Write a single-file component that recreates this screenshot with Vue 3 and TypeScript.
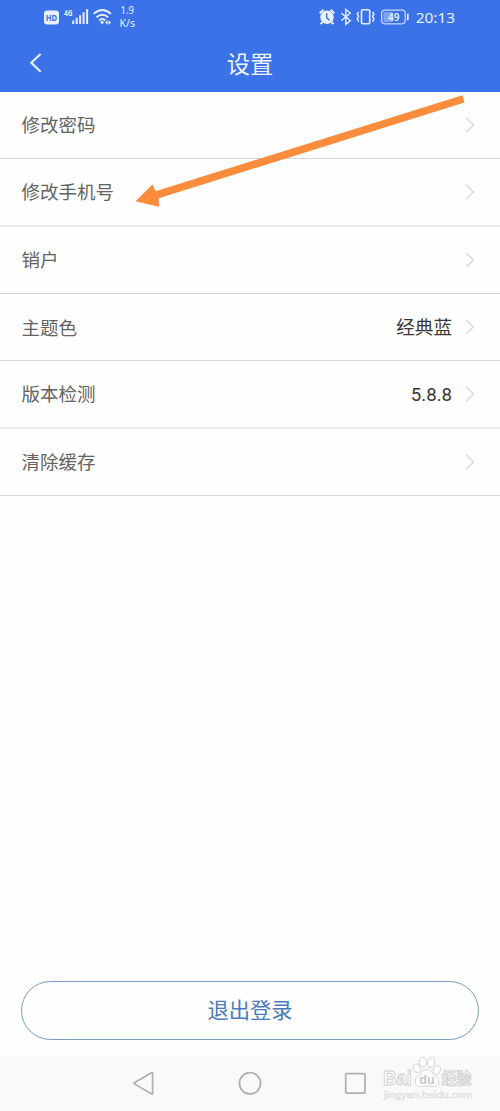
<script setup lang="ts">
interface SettingRow {
  label: string
  value?: string
  soft?: boolean
}

const rows: SettingRow[] = [
  { label: '修改密码' },
  { label: '修改手机号', soft: true },
  { label: '销户' },
  { label: '主题色', value: '经典蓝' },
  { label: '版本检测', value: '5.8.8', soft: true },
  { label: '清除缓存' },
]
</script>

<template>
  <div class="screen">
    <header class="top">
      <div class="status">
        <svg class="status-left" width="110" height="36" viewBox="0 0 110 36">
          <rect x="4" y="10.5" width="15" height="14" rx="3.2" fill="#e6f0ff" />
          <text x="11.5" y="21.3" class="hd" text-anchor="middle" textLength="11.5" lengthAdjust="spacingAndGlyphs">HD</text>
          <text x="24" y="16.2" class="net" textLength="8.5" lengthAdjust="spacingAndGlyphs">4G</text>
          <g fill="#e6f0ff">
            <rect x="32.2" y="20.5" width="2" height="3.5" />
            <rect x="35.7" y="17.8" width="2" height="6.2" />
            <rect x="39.1" y="15.2" width="2" height="8.8" />
            <rect x="42.6" y="12.2" width="2" height="11.8" />
            <rect x="46.1" y="9.2" width="2" height="14.8" />
          </g>
          <g fill="none" stroke="#e6f0ff" stroke-width="1.9">
            <path d="M53.7 13.9Q62.3 6.3 70.9 13.9" />
            <path d="M56.5 17.3Q62.3 12.2 68.1 17.3" />
            <path d="M59.2 20.4Q62.3 17.7 65.4 20.4" />
          </g>
          <path d="M60 21.9Q62.2 20.2 64.2 21.9L62.2 24.4Z" fill="#e6f0ff" />
          <path d="M67.6 20.2L65 22.5L67.6 24.8ZM68.5 20.2L71.1 22.5L68.5 24.8Z" fill="#e6f0ff" />
          <text x="80.5" y="14" class="rate" textLength="13.5" lengthAdjust="spacingAndGlyphs">1.9</text>
          <text x="79.5" y="26.7" class="rate" textLength="15.5" lengthAdjust="spacingAndGlyphs">K/s</text>
        </svg>
        <svg class="status-right" width="150" height="36" viewBox="0 0 150 36">
          <circle cx="12" cy="17.2" r="6.7" fill="#e6f0ff" />
          <path d="M4.7 13.2L8.5 9.8M15.5 9.8L19.3 13.2M7.6 22L5.6 24.2M16.4 22L18.4 24.2" stroke="#e6f0ff" stroke-width="1.9" fill="none" />
          <path d="M11.7 13.2V17.8L14.6 20.2" stroke="#3b72e7" stroke-width="1.4" fill="none" />
          <path d="M26.3 13L35.3 20.7L30.8 24.4V9.4L35.3 13L26.3 20.7" stroke="#e6f0ff" stroke-width="1.4" fill="none" />
          <g stroke="#e6f0ff" fill="none" stroke-width="1.6">
            <rect x="46.5" y="9.8" width="8.2" height="14" rx="1.2" />
            <path d="M43.6 11.8L42.3 14L43.6 16.3L42.3 18.5L43.6 21.8M57.6 11.8L58.9 14L57.6 16.3L58.9 18.5L57.6 21.8" stroke-width="1.5" />
          </g>
          <rect x="66.7" y="10.2" width="23.5" height="13.6" rx="3.2" fill="none" stroke="#c5d8fb" stroke-width="1.3" />
          <rect x="68.5" y="12" width="9.5" height="10" rx="1.5" fill="#7fa3f0" />
          <path d="M92.8 13.7V20.3" stroke="#e6f0ff" stroke-width="1.7" />
          <text x="78.8" y="20.8" class="battery" text-anchor="middle">49</text>
          <text x="100.7" y="22.7" class="clock" textLength="39.5" lengthAdjust="spacingAndGlyphs">20:13</text>
        </svg>
      </div>
      <nav class="titlebar">
        <svg class="back" width="14" height="22" viewBox="0 0 14 22">
          <path d="M11.6 2L2.3 10.7L11.6 19.7" fill="none" stroke="#e9f2ff" stroke-width="2.1" />
        </svg>
        <h1>设置</h1>
      </nav>
    </header>

    <main class="list">
      <div v-for="row in rows" :key="row.label" class="row" :class="{ soft: row.soft }">
        <span class="label">{{ row.label }}</span>
        <span class="value">{{ row.value }}</span>
        <svg class="chevron" width="10" height="18" viewBox="0 0 10 18">
          <path d="M1.2 1.8L8.4 9L1.2 16.2" fill="none" stroke="#dadada" stroke-width="1.5" />
        </svg>
      </div>
    </main>

    <button class="logout" type="button"><span>退出登录</span></button>

    <footer class="navigation">
      <svg width="24" height="26" viewBox="0 0 24 26">
        <path d="M20.6 2.9V23.6Q20.6 24.4 19.8 23.9L2.4 13.9Q1.5 13.3 2.4 12.7L19.8 2.6Q20.6 2.1 20.6 2.9Z" fill="none" stroke="#b0b0b0" stroke-width="1.7" />
      </svg>
      <svg width="24" height="26" viewBox="0 0 24 26">
        <circle cx="12" cy="13.3" r="10.6" fill="none" stroke="#b0b0b0" stroke-width="1.8" />
      </svg>
      <svg width="24" height="26" viewBox="0 0 24 26">
        <rect x="1.7" y="3.6" width="19.3" height="19.6" rx="1" fill="none" stroke="#b0b0b0" stroke-width="1.7" />
      </svg>
    </footer>

    <svg class="arrow" width="340" height="120" viewBox="0 0 340 120">
      <path d="M331.5 4.2L333.5 11.5L27.8 107.2L28 115.8L4.5 110.3L21.5 93.4L24.6 100.3Z" fill="#fa8c3c" />
    </svg>

    <svg class="watermark" width="100" height="50" viewBox="0 0 100 50">
      <g fill="#fff" stroke="#cfcfcf" stroke-width="0.9">
        <text x="2" y="28.8" class="brand" textLength="29" lengthAdjust="spacingAndGlyphs">Bai</text>
        <ellipse cx="35.8" cy="12.3" rx="3.5" ry="4.4" transform="rotate(-18 35.8 12.3)" />
        <ellipse cx="41.8" cy="6.2" rx="3.5" ry="4.9" />
        <ellipse cx="50.2" cy="6.7" rx="3.5" ry="4.9" transform="rotate(12 50.2 6.7)" />
        <ellipse cx="55.8" cy="14" rx="3.4" ry="4.4" transform="rotate(22 55.8 14)" />
        <path d="M46 13.5C41.5 13.5 40.4 17.7 36.8 20.2C32.5 23 33.8 31 39.5 30.6C44.5 29.8 48 29.8 52 30.6C58.4 31.2 59.4 23.6 55.2 20.6C51.4 17.7 50.7 13.5 46 13.5Z" />
        <text x="60.5" y="27.5" class="chinese" textLength="30" lengthAdjust="spacingAndGlyphs">经验</text>
      </g>
      <text x="38.2" y="27.6" class="du" textLength="15.5" lengthAdjust="spacingAndGlyphs">du</text>
      <text x="3" y="41.8" class="site" textLength="88.5" lengthAdjust="spacingAndGlyphs">jingyan.baidu.com</text>
    </svg>
  </div>
</template>

<style>
body {
  margin: 0;
  background: #fefefe;
}
</style>

<style scoped>
.screen {
  position: relative;
  display: flex;
  flex-direction: column;
  width: 500px;
  height: 1111px;
  overflow: hidden;
  background: #fefefe;
  font-family: "Noto Sans CJK SC", sans-serif;
}

.top {
  flex: none;
  height: 92px;
  background: #3b72e7;
}

.status {
  display: flex;
  justify-content: space-between;
  height: 36px;
  padding: 0 35px 0 40px;
}

.status text {
  fill: #e6f0ff;
  font-family: "Noto Sans", sans-serif;
}

.status .hd {
  fill: #3b72e7;
  font-size: 9.5px;
  font-weight: 700;
}

.status .net {
  font-size: 8px;
  font-weight: 700;
}

.status .rate {
  font-size: 10px;
}

.status .battery {
  font-size: 10px;
  font-weight: 600;
}

.status .clock {
  font-size: 14.8px;
}

.titlebar {
  display: grid;
  grid-template-columns: 60px 1fr 60px;
  align-items: center;
  height: 54px;
}

.back {
  margin-left: 29px;
}

h1 {
  margin: 0;
  color: #edf5ff;
  font-size: 23.3px;
  font-weight: 400;
  line-height: 54px;
  text-align: center;
}

.list {
  flex: 1;
}

.row {
  display: flex;
  align-items: center;
  box-sizing: border-box;
  height: 67.35px;
  padding: 0 25.5px 0 21.5px;
  border-bottom: 1px solid #d6d6d6;
}

.row.soft {
  border-bottom: 2px solid #ebebeb;
}

.label {
  padding-bottom: 1.4px;
  color: #636363;
  font-size: 18.5px;
  line-height: 28px;
}

.value {
  margin-left: auto;
  margin-right: 12.5px;
  padding-top: 1.6px;
  color: #383838;
  font-family: Roboto, "Noto Sans CJK SC", sans-serif;
  font-size: 18.6px;
  line-height: 28px;
}

.logout {
  flex: none;
  box-sizing: border-box;
  height: 59px;
  margin: 0 21px 16px;
  padding: 0 0 3px;
  border: 1px solid #7d9dbf;
  border-radius: 30px;
  background: #fefefe;
  color: #4b7abb;
  font-family: inherit;
  font-size: 21.3px;
  line-height: 54px;
}

.navigation {
  display: flex;
  flex: none;
  justify-content: center;
  gap: 82px;
  height: 55px;
  box-sizing: border-box;
  padding-top: 14px;
  background: #f9f9f9;
}

.arrow {
  position: absolute;
  top: 91px;
  left: 131px;
}

.watermark {
  position: absolute;
  top: 1056px;
  left: 381px;
}

.brand {
  font: 700 20.5px "Liberation Sans", sans-serif;
}

.chinese {
  font-size: 16px;
  font-weight: 700;
}

.du {
  fill: #c8c8c8;
  font: 700 13px "Liberation Sans", sans-serif;
}

.site {
  fill: #fff;
  stroke: #dedede;
  stroke-width: 0.6px;
  font: 9.5px "Liberation Sans", sans-serif;
}
</style>
